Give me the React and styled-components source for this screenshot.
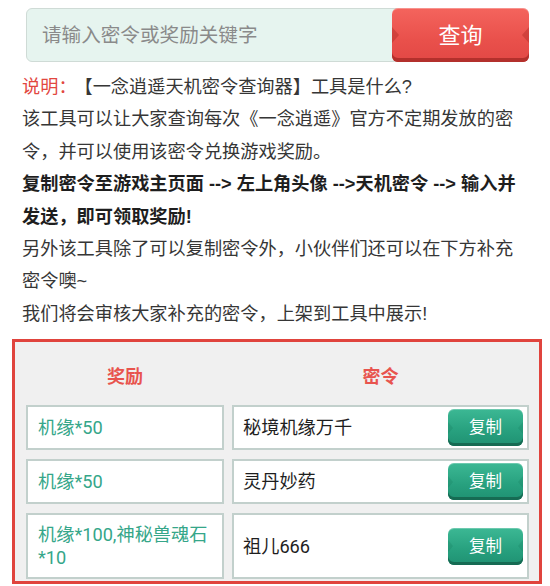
import React from 'react';
import styled, { createGlobalStyle, css } from 'styled-components';

const codes = [
  { reward: '机缘*50', code: '秘境机缘万千' },
  { reward: '机缘*50', code: '灵丹妙药' },
  { reward: '机缘*100,神秘兽魂石*10', code: '祖儿666' },
];

const GlobalStyle = createGlobalStyle`
  html, body {
    margin: 0;
    padding: 0;
    background: #ffffff;
  }
  body {
    font-family: 'Liberation Sans', 'Noto Sans CJK SC', sans-serif;
    color: #333;
  }
  * {
    box-sizing: border-box;
  }
`;

// little dark wedges on the sides of the glossy buttons
const notches = css`
  &::before,
  &::after {
    content: '';
    position: absolute;
    top: 50%;
    margin-top: -${(p) => p.$size}px;
    border-top: ${(p) => p.$size}px solid transparent;
    border-bottom: ${(p) => p.$size}px solid transparent;
  }
  &::before {
    left: 0;
    border-left: ${(p) => p.$size - 1}px solid ${(p) => p.$notch};
  }
  &::after {
    right: 0;
    border-right: ${(p) => p.$size - 1}px solid ${(p) => p.$notch};
  }
`;

const App = () => {
  return (
    <>
      <GlobalStyle />
      <Page>
        <SearchBar>
          <SearchInput placeholder="请输入密令或奖励关键字" />
          <SearchButton $notch="rgba(170, 40, 36, 0.4)" $size={8}>查询</SearchButton>
        </SearchBar>

        <Intro>
          <p>
            <Label>说明：</Label>【一念逍遥天机密令查询器】工具是什么?
          </p>
          <p>该工具可以让大家查询每次《一念逍遥》官方不定期发放的密令，并可以使用该密令兑换游戏奖励。</p>
          <Strong>复制密令至游戏主页面 --&gt; 左上角头像 --&gt;天机密令 --&gt; 输入并发送，即可领取奖励!</Strong>
          <p>另外该工具除了可以复制密令外，小伙伴们还可以在下方补充密令噢~</p>
          <p>我们将会审核大家补充的密令，上架到工具中展示!</p>
        </Intro>

        <CodeBox>
          <Grid>
            <HeadCell>奖励</HeadCell>
            <HeadCell>密令</HeadCell>
          </Grid>
          <Rows>
            {codes.map((item, i) => (
              <Grid key={i}>
                <RewardCell>{item.reward}</RewardCell>
                <CodeCell>
                  <CodeText>{item.code}</CodeText>
                  <CopyButton $notch="rgba(10, 90, 66, 0.14)" $size={6}>复制</CopyButton>
                </CodeCell>
              </Grid>
            ))}
          </Rows>
        </CodeBox>
      </Page>
    </>
  );
};

// --- STYLES ---

const Page = styled.div`
  width: 550px;
  padding-top: 8px;
`;

const SearchBar = styled.div`
  display: flex;
  align-items: stretch;
  height: 54px;
  margin: 0 21px 0 26px;
`;

const SearchInput = styled.input`
  flex: 1;
  min-width: 0;
  height: 54px;
  margin-right: -6px;
  padding: 0 15px;
  border: 1px solid #cfdbd6;
  border-radius: 6px 0 0 6px;
  background: #e6f4ef;
  font-family: 'Liberation Sans', 'Noto Sans CJK SC', sans-serif;
  font-size: 19.6px;
  color: #555;
  outline: none;

  &::placeholder {
    color: #8a8a8a;
  }
`;

const SearchButton = styled.button`
  position: relative;
  width: 137px;
  height: 54px;
  padding: 0 0 4px;
  border: none;
  border-radius: 6px;
  background: linear-gradient(#f4645d, #e9504b 60%, #e24845);
  box-shadow: inset 0 -4px 0 #b3302c, inset 0 1px 0 rgba(255, 255, 255, 0.3);
  color: #fff;
  font-family: 'Noto Sans CJK SC', sans-serif;
  font-size: 22px;
  cursor: pointer;
  ${notches}
`;

const Intro = styled.div`
  width: 506px;
  margin: 9px 0 0 22px;
  font-size: 18.2px;
  line-height: 32.4px;
  color: #363636;

  p {
    margin: 0;
  }
`;

const Label = styled.span`
  margin-right: 7px;
  color: #e2473f;
`;

const Strong = styled.p`
  font-weight: bold;
  color: #1e1e1e;
`;

const CodeBox = styled.div`
  width: 530px;
  margin: 9px 0 0 12px;
  padding: 0 10px 2px 11px;
  border: 3px solid #e0443d;
  background: #f0f0f0;
`;

const Grid = styled.div`
  display: grid;
  grid-template-columns: 198px 1fr;
  column-gap: 8px;
`;

const HeadCell = styled.div`
  height: 63px;
  padding-top: 22px;
  line-height: 22px;
  text-align: center;
  font-family: 'Noto Sans CJK SC', sans-serif;
  font-size: 18px;
  font-weight: bold;
  color: #e8544e;
`;

const Rows = styled.div`
  display: flex;
  flex-direction: column;
  gap: 9px;
`;

const Cell = styled.div`
  display: flex;
  align-items: center;
  min-height: 45px;
  padding: 8px 10px;
  border: 2px solid #c2d0cc;
  background: #ffffff;
  line-height: 23px;
  font-family: Roboto, 'Noto Sans CJK SC', sans-serif;
`;

const RewardCell = styled(Cell)`
  font-size: 18.2px;
  color: #35a689;
`;

const CodeCell = styled(Cell)`
  justify-content: space-between;
  padding: 2px 4px 2px 9px;
  font-size: 18.2px;
  color: #1e1e1e;
`;

const CodeText = styled.span`
  flex: 1;
`;

const CopyButton = styled.button`
  position: relative;
  width: 75px;
  height: 37px;
  padding: 0 0 3px;
  border: none;
  border-radius: 6px;
  background: linear-gradient(#3cb894, #27a07e 60%, #1f9172);
  box-shadow: inset 0 -3px 0 #166b53, inset 0 1px 0 rgba(255, 255, 255, 0.25);
  color: #fff;
  font-family: 'Noto Sans CJK SC', sans-serif;
  font-size: 16.5px;
  cursor: pointer;
  ${notches}
`;

export default App;
